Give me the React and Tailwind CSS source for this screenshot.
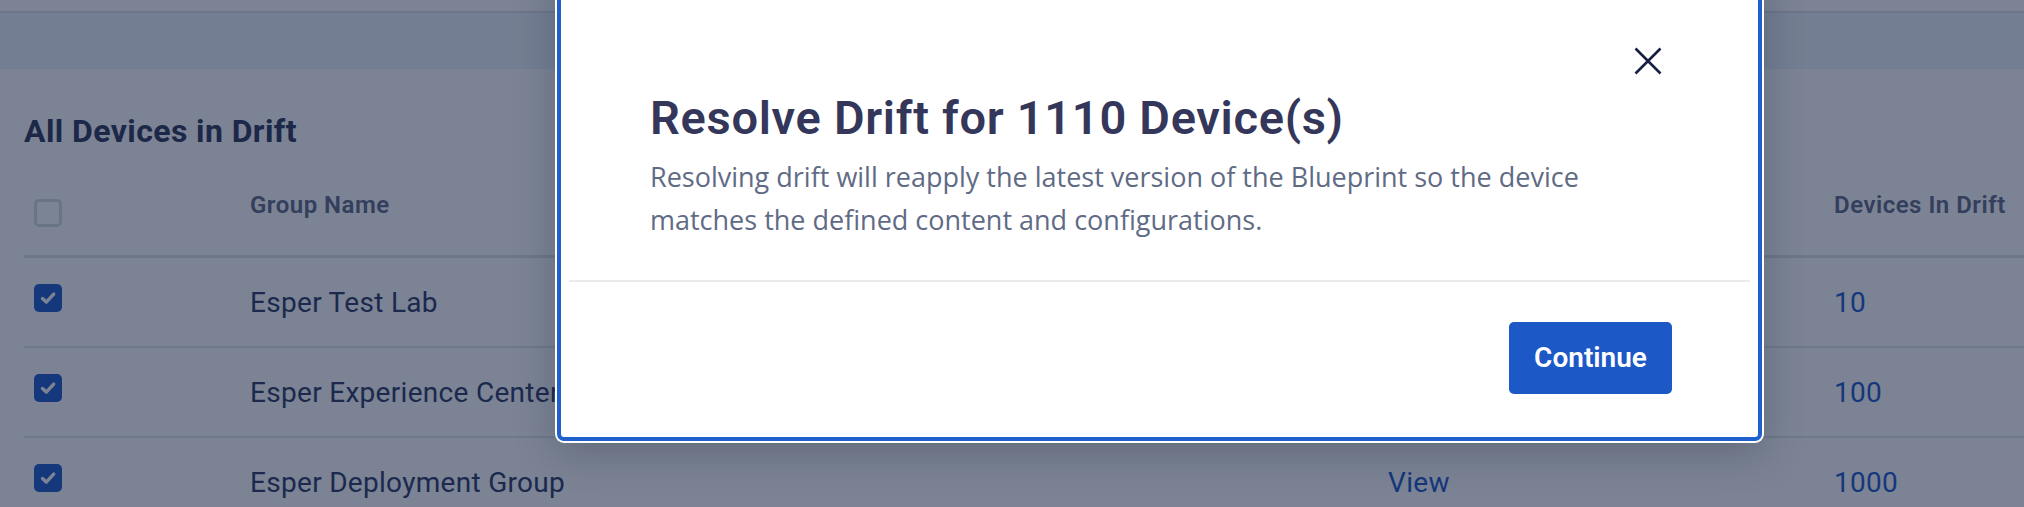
import React from "react";

const groups = [
  { name: "Esper Test Lab", count: 10 },
  { name: "Esper Experience Center", count: 100 },
  { name: "Esper Deployment Group", count: 1000 },
];

function Checkbox({ checked }) {
  if (checked) {
    return (
      <div className="w-[28px] h-[28px] rounded-[5px] bg-[#1d58c7] flex items-center justify-center">
        <svg width="28" height="28" viewBox="0 0 28 28" fill="none">
          <path
            d="M8.5 14.5l3.8 3.6 7.4-8"
            stroke="#ffffff"
            strokeWidth="3.4"
            strokeLinecap="round"
            strokeLinejoin="round"
          />
        </svg>
      </div>
    );
  }
  return <div className="w-[28px] h-[28px] rounded-[5px] border-[3px] border-[#d9dde3] bg-white" />;
}

function DriftTable() {
  return (
    <div className="pl-[24px]">
      <h2 className="mt-[42px] text-[32px] leading-[40px] font-bold tracking-[0.4px] text-[#2f3558]">
        All Devices in Drift
      </h2>

      {/* header */}
      <div className="grid grid-cols-[226px_1138px_446px_1fr] items-start h-[107px] pt-[40px] border-b-[3px] border-[#dfe2e7] text-[24px] leading-[28px] font-semibold tracking-[0.5px] text-[#5f6884]">
        <div className="pl-[10px] mt-[8px]">
          <Checkbox checked={false} />
        </div>
        <div>Group Name</div>
        <div />
        <div>Devices In Drift</div>
      </div>

      {/* rows */}
      {groups.map((g) => (
        <div
          key={g.name}
          className="grid grid-cols-[226px_1138px_446px_1fr] items-start h-[90px] pt-[26px] border-b-2 border-[#e3e6ea] text-[28px] leading-[36px] tracking-[0.3px]"
        >
          <div className="pl-[10px]">
            <Checkbox checked />
          </div>
          <div className="mt-[1px] text-[#2d3862]">{g.name}</div>
          <div className="mt-[1px] text-[#1d58c7]">View</div>
          <div className="mt-[1px] text-[#1d58c7]">{g.count}</div>
        </div>
      ))}
    </div>
  );
}

function ResolveDriftModal() {
  return (
    <div className="absolute left-[557px] top-[-40px] w-[1205px] bg-white rounded-[7px] border-[4px] border-[#1f60cc] ring-2 ring-white shadow-[0_10px_40px_rgba(10,20,45,0.25)]">
      <button className="absolute top-[83px] right-[96px] w-[28px] h-[28px] text-[#172042]">
        <svg width="28" height="28" viewBox="0 0 28 28" fill="none">
          <path d="M1.5 1.5l25 25M26.5 1.5l-25 25" stroke="currentColor" strokeWidth="2.6" />
        </svg>
      </button>

      <div className="pl-[89px] pr-[89px] pt-[126px] pb-[39px]">
        <h1 className="text-[47px] leading-[56px] font-semibold tracking-[0.7px] text-[#34375a]">
          Resolve Drift for 1110 Device(s)
        </h1>
        <p className="mt-[9px] max-w-[990px] font-['Open_Sans',sans-serif] text-[27px] leading-[43px] text-[#5f6b85]">
          Resolving drift will reapply the latest version of the Blueprint so the device matches the defined
          content and configurations.
        </p>
      </div>

      <div className="mx-2 h-[2px] bg-[#ebebeb]" />

      <div className="flex justify-end pt-[40px] pb-[43px] pr-[86px]">
        <button className="w-[163px] h-[72px] rounded-[5px] bg-[#1d58c7] text-white text-[28px] font-semibold">
          Continue
        </button>
      </div>
    </div>
  );
}

export default function App() {
  return (
    <div className="relative w-full h-[507px] overflow-hidden bg-white font-[Roboto,sans-serif]">
      <div className="h-[11px] bg-white" />
      <div className="h-[2px] bg-[#dde1e6]" />
      <div className="h-[56px] bg-[#eff4fa]" />
      <DriftTable />

      {/* backdrop */}
      <div className="absolute inset-0 bg-[#0f1e3d]/55" />

      <ResolveDriftModal />
    </div>
  );
}
